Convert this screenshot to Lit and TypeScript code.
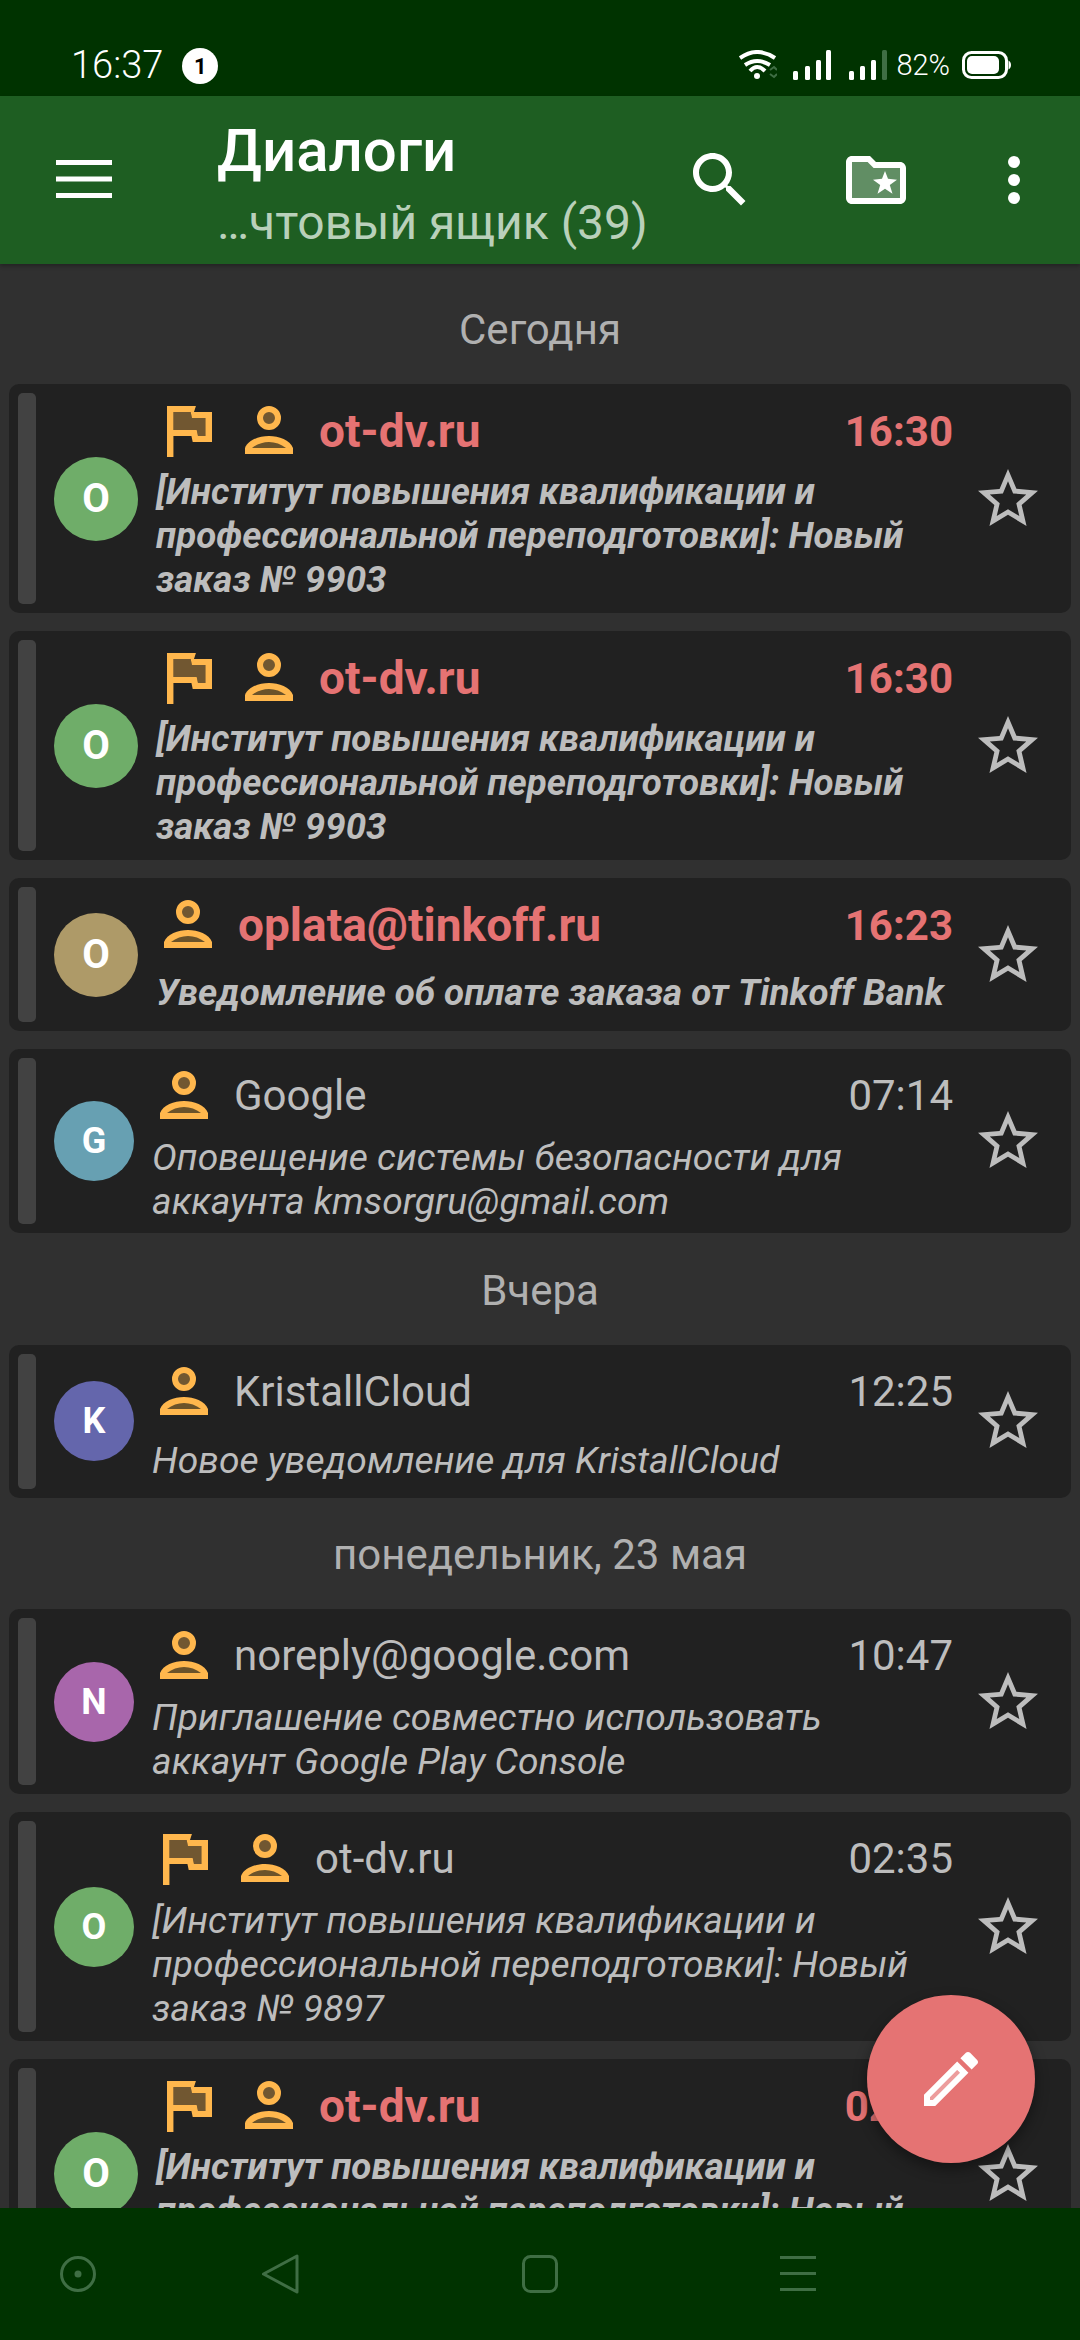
import { LitElement, html, css, svg, nothing } from "lit";
import { customElement } from "lit/decorators.js";
import { classMap } from "lit/directives/class-map.js";

type Item = {
  kind: "mail";
  letter: string;
  color: string;
  name: string;
  time: string;
  text: string;
  unread?: boolean;
  flag?: boolean;
  single?: boolean;
  two?: boolean;
};
type Head = { kind: "head"; label: string };

const INST = "[Институт повышения квалификации и профессиональной переподготовки]: Новый заказ № ";
const GREEN = "#6fad69";

const rows: (Item | Head)[] = [
  { kind: "head", label: "Сегодня" },
  { kind: "mail", letter: "O", color: GREEN, name: "ot-dv.ru", time: "16:30", text: INST + "9903", unread: true, flag: true },
  { kind: "mail", letter: "O", color: GREEN, name: "ot-dv.ru", time: "16:30", text: INST + "9903", unread: true, flag: true },
  { kind: "mail", letter: "O", color: "#ae9a68", name: "oplata@tinkoff.ru", time: "16:23", text: "Уведомление об оплате заказа от Tinkoff Bank", unread: true, single: true },
  { kind: "mail", letter: "G", color: "#67a0b2", name: "Google", time: "07:14", text: "Оповещение системы безопасности для аккаунта kmsorgru@gmail.com", two: true },
  { kind: "head", label: "Вчера" },
  { kind: "mail", letter: "K", color: "#6466ac", name: "KristallCloud", time: "12:25", text: "Новое уведомление для KristallCloud", single: true },
  { kind: "head", label: "понедельник, 23 мая" },
  { kind: "mail", letter: "N", color: "#a866ab", name: "noreply@google.com", time: "10:47", text: "Приглашение совместно использовать аккаунт Google Play Console" },
  { kind: "mail", letter: "O", color: GREEN, name: "ot-dv.ru", time: "02:35", text: INST + "9897", flag: true },
  { kind: "mail", letter: "O", color: GREEN, name: "ot-dv.ru", time: "02:33", text: INST + "9896", unread: true, flag: true },
];

const flagIcon = svg`<svg class="flag" viewBox="5 4 14 17" preserveAspectRatio="none">
  <path fill="#ffb74d" fill-opacity=".36" d="M12.36 6H7v6h7.24l.4 2H18V8h-5.24z"/>
  <path fill="#ffb74d" d="M12.36 6l.08.39.32 1.61H17v6h-2.36l-.08-.39-.32-1.61H7V6h5.36M14 4H5v17h2v-7h5.6l.4 2h6V6h-5.6L14 4z"/>
</svg>`;

const personIcon = svg`<svg class="person" viewBox="0 0 48 48">
  <circle cx="24" cy="12" r="9" fill="#ffb74d" fill-opacity=".36" stroke="#ffb74d" stroke-width="6"/>
  <path fill="#ffb74d" d="M0 48V42C3 34 14 30 24 30C34 30 45 34 48 42V48Z"/>
  <path fill="#6b532a" d="M7 42C12 38 18 36 24 36C30 36 36 38 41 42Z"/>
</svg>`;

const starIcon = svg`<svg class="star" viewBox="0 0 24 24"><path fill="#bdbdbd" d="M22 9.24l-7.19-.62L12 2 9.19 8.63 2 9.24l5.46 4.73L5.82 21 12 17.27 18.18 21l-1.63-7.03L22 9.24zM12 15.4l-3.76 2.27 1-4.28-3.32-2.88 4.38-.38L12 6.1l1.71 4.04 4.38.38-3.32 2.88 1 4.28L12 15.4z"/></svg>`;

@customElement("app-root")
export class AppRoot extends LitElement {
  static styles = css`
    :host {
      display: flex;
      flex-direction: column;
      position: relative;
      width: 1080px;
      height: 2340px;
      overflow: hidden;
      background: #303030;
      font-family: Roboto, "Liberation Sans", sans-serif;
    }
    .status {
      flex: none;
      height: 96px;
      box-sizing: border-box;
      padding: 36px 69px 0 71px;
      background: #003300;
      color: #fff;
      display: flex;
      align-items: center;
    }
    .clock { font-size: 38px; font-weight: 300; line-height: 60px; margin-top: -2px; }
    .badge {
      width: 36px; height: 36px; margin-left: 19px; border-radius: 50%;
      background: #fff; color: #000; font-size: 22px; font-weight: 700;
      display: flex; align-items: center; justify-content: center;
    }
    .sp { flex: 1; }
    .wifi { width: 38px; height: 30px; margin-top: -2px; }
    .sig { width: 38px; height: 30px; margin-left: 16px; margin-top: -2px; }
    .sig2 { margin-left: 18px; }
    .pct { font-size: 29px; font-weight: 300; margin-left: 9px; margin-top: -2px; }
    .batt { width: 49px; height: 28px; margin-left: 12px; margin-top: -2px; }

    .bar {
      flex: none; height: 168px; background: #1e5e22; color: #fff;
      display: flex; align-items: center; position: relative; z-index: 2;
      box-shadow: 0 2px 4px rgba(0,0,0,.3);
    }
    .ic { width: 72px; height: 72px; flex: none; }
    .burger { margin-left: 48px; }
    .titles { flex: 1; margin-left: 97px; min-width: 0; align-self: flex-start; }
    .t1 { font-size: 60px; font-weight: 500; line-height: 68px; margin-top: 21px; }
    .t2 { font-size: 48px; font-weight: 400; line-height: 72px; color: #b9d0ba; margin-top: 2px; white-space: nowrap; }
    .search { margin-right: 84px; }
    .folder { margin-right: 66px; }
    .dots { margin-right: 30px; }

    .list { flex: 1; min-height: 0; overflow: hidden; padding-top: 8.5px; }
    .head {
      height: 111.5px; box-sizing: border-box; padding-top: 3px; margin-top: -18px;
      display: flex; align-items: center; justify-content: center;
      font-size: 42px; color: #b0b0b0;
    }
    .head.first { margin-top: 0; }
    .card {
      margin: 0 9px 18px 9px; background: #212121; border-radius: 10px;
      display: flex; align-items: center; padding: 9px 0 9px 9px; position: relative;
    }
    .rail { width: 18px; align-self: stretch; background: #424242; border-radius: 5px; flex: none; }
    .av {
      flex: none; width: 80px; height: 80px; margin-left: 18px; border-radius: 50%;
      color: #fff; font-weight: 700; font-size: 36px;
      display: flex; align-items: center; justify-content: center;
    }
    .main { flex: 1; min-width: 0; margin-left: 16px; padding: 13px 0 2px; }
    .top { height: 64px; display: flex; align-items: flex-start; color: #bdbdbd; }
    .flag { width: 45px; height: 51px; margin-left: 13px; margin-right: 23px; flex: none; }
    .person { width: 48px; height: 48px; margin-left: 10px; margin-right: 26px; flex: none; }
    .name { flex: 1; min-width: 0; font-size: 42px; line-height: 48px; font-weight: 400; white-space: nowrap; margin-top: 1px; }
    .time { font-size: 42px; line-height: 48px; font-weight: 400; margin-top: 1px; }
    .text { font-size: 37.200px; line-height: 44px; font-style: italic; font-weight: 400; color: #bdbdbd; margin-left: 2px; }
    .card.single .text { margin-top: 7px; margin-bottom: 5px; }
    .card.two .text { margin-bottom: -1px; }
    .star { width: 72px; height: 72px; flex: none; margin-left: 19px; margin-right: 27px; }
    .card.unread .av { width: 84px; height: 84px; font-size: 40px; }
    .card.unread .name { color: #e57373; font-weight: 700; font-size: 46px; margin-top: 1px; }
    .card.unread .time { color: #e57373; font-weight: 700; margin-top: 2px; }
    .card.unread .text { font-weight: 700; font-size: 36.700px; }

    .fab {
      position: absolute; left: 867px; top: 1995px; width: 168px; height: 168px; border-radius: 50%;
      background: #e57373; display: flex; align-items: center; justify-content: center; z-index: 3;
      box-shadow: 0 6px 14px rgba(0,0,0,.4);
    }
    .nav {
      flex: none; height: 132px; background: #003300; position: relative; z-index: 2;
      display: flex; align-items: center; padding-left: 58px;
    }
    .nav svg { width: 40px; height: 40px; flex: none; }
    .n2 { margin-left: 162px; }
    .n3 { margin-left: 220px; }
    .n4 { margin-left: 218px; }
  `;

  private mail(r: Item) {
    return html`<div class=${classMap({ card: true, unread: !!r.unread, single: !!r.single, two: !!r.two })}>
      <div class="rail"></div>
      <div class="av" style="background:${r.color}">${r.letter}</div>
      <div class="main">
        <div class="top">
          ${r.flag ? flagIcon : nothing}
          ${personIcon}
          <div class="name">${r.name}</div>
          <div class="time">${r.time}</div>
        </div>
        <div class="text">${r.text}</div>
      </div>
      ${starIcon}
    </div>`;
  }

  render() {
    return html`
      <div class="status">
        <span class="clock">16:37</span>
        <span class="badge">1</span>
        <span class="sp"></span>
        <svg class="wifi" viewBox="0 0 38 30" fill="none" stroke="#fff">
          <path stroke-width="4" d="M1 8Q18 -4 36 8"/>
          <path stroke-width="4" d="M6 15Q18 7 31 15"/>
          <path stroke-width="4" d="M11 21Q18 13 26 21"/>
          <circle cx="18" cy="26" r="3" fill="#fff" stroke="none"/>
          <path stroke="#3f6e44" stroke-width="2" d="M31 20l4-3 3 3M31 24l4 3 3-3"/>
        </svg>
        <svg class="sig" viewBox="0 0 38 30" fill="#fff">
          <rect x="0" y="21" width="5" height="9" rx="1.5"/><rect x="12" y="16" width="5" height="14" rx="1.5"/>
          <rect x="23" y="10" width="5" height="20" rx="1.5"/><rect x="33" y="0" width="5" height="30" rx="1.5"/>
        </svg>
        <svg class="sig sig2" viewBox="0 0 38 30" fill="#fff">
          <rect x="0" y="21" width="5" height="9" rx="1.5"/><rect x="11" y="16" width="5" height="14" rx="1.5"/>
          <rect x="22" y="10" width="5" height="20" rx="1.5"/><rect x="33" y="0" width="5" height="30" rx="1.5" fill="#3f6e44"/>
        </svg>
        <span class="pct">82%</span>
        <svg class="batt" viewBox="0 0 49 28" fill="none">
          <rect x="1.5" y="1.5" width="43" height="25" rx="8" stroke="#fff" stroke-width="3"/>
          <rect x="5" y="5" width="32" height="18" rx="5" fill="#fff"/>
          <path d="M46.500 9.500C48 10 49 12 49 14C49 16 48 18 46.500 18.500Z" fill="#fff"/>
        </svg>
      </div>

      <div class="bar">
        <svg class="ic burger" viewBox="0 0 72 72" fill="#fff">
          <rect x="8" y="16" width="56" height="5"/><rect x="8" y="32.500" width="56" height="5"/><rect x="8" y="49" width="56" height="5"/>
        </svg>
        <div class="titles">
          <div class="t1">Диалоги</div>
          <div class="t2">…чтовый ящик (39)</div>
        </div>
        <svg class="ic search" viewBox="0 0 24 24" fill="#fff"><path d="M15.5 14h-.79l-.28-.27C15.41 12.59 16 11.11 16 9.5 16 5.91 13.09 3 9.5 3S3 5.91 3 9.5 5.91 16 9.5 16c1.61 0 3.09-.59 4.23-1.57l.27.28v.79l5 4.99L20.49 19l-4.99-5zm-6 0C7.01 14 5 11.99 5 9.5S7.01 5 9.5 5 14 7.01 14 9.5 11.99 14 9.5 14z"/></svg>
        <svg class="ic folder" viewBox="0 0 24 24" fill="#fff">
          <path fill-opacity=".3" d="M4 6v12h16V8h-8.830l-2-2z"/>
          <path d="M20 6h-8l-2-2H4c-1.100 0-2 .9-2 2v12c0 1.100.9 2 2 2h16c1.100 0 2-.9 2-2V8c0-1.100-.9-2-2-2zm0 12H4V6h5.170l2 2H20v10z"/>
          <path d="M15 9 16 11.600 19 11.900 16.600 13.700 17.500 16.600 15 14.900 12.500 16.600 13.400 13.700 11 11.900 14 11.600Z"/>
        </svg>
        <svg class="ic dots" viewBox="0 0 72 72" fill="#fff"><circle cx="36" cy="18" r="6"/><circle cx="36" cy="36" r="6"/><circle cx="36" cy="54" r="6"/></svg>
      </div>

      <div class="list">
        ${rows.map((r, i) =>
          r.kind === "head"
            ? html`<div class=${classMap({ head: true, first: i === 0 })}>${r.label}</div>`
            : this.mail(r)
        )}
      </div>

      <div class="fab">
        <svg class="ic" viewBox="0 0 24 24" fill="#fff">
          <path fill-opacity=".3" d="M5 18.080V19h.92l9.060-9.060-.92-.92z"/>
          <path d="M3 17.250V21h3.750L17.810 9.940l-3.750-3.750L3 17.250zM5.920 19H5v-.92l9.060-9.060.92.92L5.920 19zM20.710 5.630l-2.340-2.340c-.2-.2-.45-.29-.71-.29s-.51.1-.7.29l-1.830 1.830 3.750 3.750 1.830-1.830c.39-.39.39-1.020 0-1.410z"/>
        </svg>
      </div>

      <div class="nav">
        <svg viewBox="0 0 40 40" fill="none" stroke="#3f6e44" stroke-width="3"><circle cx="20" cy="20" r="16.500"/><circle cx="20" cy="20" r="3.500" fill="#3f6e44" stroke="none"/></svg>
        <svg class="n2" viewBox="0 0 40 40" fill="none" stroke="#3f6e44" stroke-width="3" stroke-linejoin="round"><path d="M37 2V38L3.500 20Z"/></svg>
        <svg class="n3" viewBox="0 0 40 40" fill="none" stroke="#3f6e44" stroke-width="3"><rect x="3.500" y="2.500" width="33" height="35" rx="7"/></svg>
        <svg class="n4" viewBox="0 0 40 40" fill="#3f6e44"><rect x="2" y="2" width="36" height="3"/><rect x="2" y="18" width="36" height="3"/><rect x="2" y="34" width="36" height="3"/></svg>
      </div>
    `;
  }
}
